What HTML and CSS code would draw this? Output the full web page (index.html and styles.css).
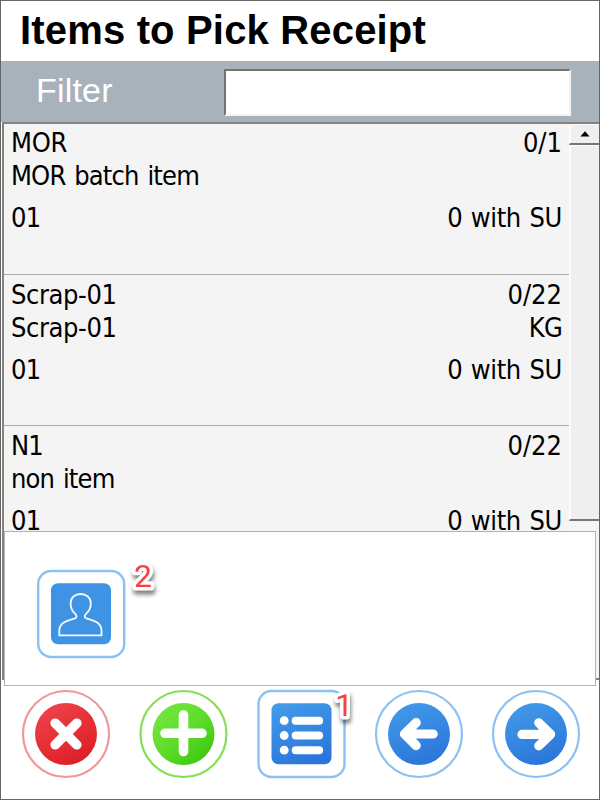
FILE: index.html
```html
<!DOCTYPE html>
<html lang="en">
<head>
<meta charset="utf-8">
<title>Items to Pick Receipt</title>
<link rel="stylesheet" href="styles.css">
</head>
<body>
<svg width="0" height="0" class="defs" aria-hidden="true">
  <defs>
    <linearGradient id="blue" x1="0.3" y1="0" x2="0.7" y2="1"><stop offset="0" stop-color="#4199e8"/><stop offset="1" stop-color="#2a74da"/></linearGradient>
    <linearGradient id="red" x1="0.2" y1="0" x2="0.8" y2="1"><stop offset="0" stop-color="#ee444b"/><stop offset="1" stop-color="#dd1c23"/></linearGradient>
    <linearGradient id="green" x1="0.15" y1="0.1" x2="0.85" y2="0.9"><stop offset="0" stop-color="#74e53d"/><stop offset="0.5" stop-color="#5edc2c"/><stop offset="1" stop-color="#3dc911"/></linearGradient>
  </defs>
</svg>
<div class="window">
  <h1 class="title">Items to Pick Receipt</h1>
  <div class="filter">
    <label class="filter-label" for="filter">Filter</label>
    <input class="filter-input" id="filter" type="text">
  </div>
  <main class="list">
    <div class="items">
      <section class="item">
        <div class="line"><span class="t-mor">MOR</span><span class="t-qty">0/1</span></div>
        <div class="line"><span class="t-name">MOR batch item</span></div>
        <div class="line last"><span class="t-wh">01</span><span class="t-su">0 with SU</span></div>
      </section>
      <section class="item">
        <div class="line"><span class="t-scrap">Scrap-01</span><span class="t-qty">0/22</span></div>
        <div class="line"><span class="t-scrap">Scrap-01</span><span class="t-kg">KG</span></div>
        <div class="line last"><span class="t-wh">01</span><span class="t-su">0 with SU</span></div>
      </section>
      <section class="item">
        <div class="line"><span class="t-n">N1</span><span class="t-qty">0/22</span></div>
        <div class="line"><span class="t-name">non item</span></div>
        <div class="line last"><span class="t-wh">01</span><span class="t-su">0 with SU</span></div>
      </section>
    </div>
    <div class="scrollbar">
      <div class="arrow"><svg width="10" height="6" viewBox="0 0 10 6"><path d="M5 0.3 9.6 5.6H.4z"/></svg></div>
      <div class="thumb"></div>
    </div>
  </main>
  <nav class="toolbar">
    <button class="tool"><svg viewBox="0 0 88 88"><circle cx="44" cy="44" r="43" fill="#fff" stroke="#f0979b" stroke-width="2.2"/><circle cx="44" cy="44" r="31" fill="url(#red)"/><path d="M33.2 33.2 54.8 54.8M54.8 33.2 33.2 54.8" stroke="#fff" stroke-width="9.6" stroke-linecap="round"/></svg></button>
    <button class="tool"><svg viewBox="0 0 88 88"><circle cx="43.5" cy="44" r="43" fill="#fff" stroke="#83e055" stroke-width="2.2"/><circle cx="43.5" cy="44" r="31" fill="url(#green)"/><path d="M43.5 25V61.5M25 43.3H62" stroke="#fff" stroke-width="9.6" stroke-linecap="round"/></svg></button>
    <button class="tool menu"><svg viewBox="0 0 88 88"><rect x="1.5" y="1" width="86" height="86" rx="13" fill="#fff" stroke="#8bc1f3" stroke-width="2.4"/><rect x="14.5" y="13.3" width="60" height="61" rx="7" fill="url(#blue)"/><g fill="#fff"><circle cx="27.2" cy="30.7" r="4.4"/><circle cx="27.2" cy="45.5" r="4.4"/><circle cx="27.2" cy="60.2" r="4.4"/><rect x="34.7" y="26.7" width="31.4" height="8" rx="4"/><rect x="34.7" y="41.5" width="31.4" height="8" rx="4"/><rect x="34.7" y="56.2" width="31.4" height="8" rx="4"/></g></svg><svg class="mark mark-one" viewBox="0 0 40 44"><text x="9" y="32">1</text></svg></button>
    <button class="tool"><svg viewBox="0 0 88 88"><circle cx="44" cy="44" r="43" fill="#fff" stroke="#8bc1f3" stroke-width="2.2"/><circle cx="44" cy="44" r="31" fill="url(#blue)"/><path d="M41.2 32.6 29.4 44 41.2 55.6M31 44H58.2" fill="none" stroke="#fff" stroke-width="9.2" stroke-linecap="round" stroke-linejoin="round"/><path d="M31 44 41.2 34V54z" fill="#fff"/></svg></button>
    <button class="tool"><svg viewBox="0 0 88 88"><circle cx="44" cy="44" r="43" fill="#fff" stroke="#8bc1f3" stroke-width="2.2"/><circle cx="44" cy="44" r="31" fill="url(#blue)"/><path d="M46.8 32.8 58.6 44.4 46.8 55.8M57 44.4H30" fill="none" stroke="#fff" stroke-width="9.2" stroke-linecap="round" stroke-linejoin="round"/><path d="M57 44.4 46.8 34.4V54.4z" fill="#fff"/></svg></button>
  </nav>
  <div class="popup">
    <button class="tool"><svg viewBox="0 0 88 88"><rect x="1.2" y="1" width="86" height="86" rx="13" fill="#fff" stroke="#8bc1f3" stroke-width="2.4"/><rect x="14" y="13.3" width="60" height="61" rx="7" fill="#3f93e5"/><path d="M22.3 65.4V60.5C22.5 51.5 32 50.5 38 48.3 40.3 47.3 39.7 45.6 38.5 44.2 35 41 33.6 37.5 33.6 33.5 33.6 27.5 38 24 43.6 24S53.8 27.5 53.8 33.5C53.8 37.5 52.3 41 48.8 44.2 47.4 45.6 47 47.3 49.5 48.3 55.5 50.5 64.3 51.5 64.5 60.5V65.4Z" fill="none" stroke="#f4f9ff" stroke-width="1.8"/></svg><svg class="mark mark-two" viewBox="0 0 40 44"><text x="9" y="32">2</text></svg></button>
  </div>
</div>
</body>
</html>
```
FILE: styles.css
```css
* { box-sizing: border-box; }
body { margin: 0; background: #fff; color: #000; }
.defs { position: absolute; }
.window {
  position: relative;
  display: flex;
  flex-direction: column;
  width: 600px;
  height: 800px;
  border: 1px solid #666;
  overflow: hidden;
  font-family: "Liberation Sans", Arial, sans-serif;
}
.title {
  flex: none;
  height: 60px;
  margin: 0;
  padding-left: 19px;
  font-size: 40px;
  line-height: 58px;
  letter-spacing: 0.17px;
}
.filter {
  flex: none;
  display: flex;
  justify-content: space-between;
  height: 61px;
  padding: 7px 28px 0 35px;
  background: #a8b2bb;
}
.filter-label { color: #fff; font-size: 34px; line-height: 44px; letter-spacing: 0.2px; }
.filter-input {
  width: 347px;
  height: 47px;
  margin-top: 1px;
  background: #fff;
  border: 2px solid;
  border-color: #77736f #f5f4f2 #f5f4f2 #77736f;
  outline: 0;
}
.list {
  flex: none;
  display: flex;
  height: 558px;
  margin-left: 1px;
  border-top: 2px solid #85827f;
  border-left: 2px solid #85827f;
  border-bottom: 2px solid #85827f;
  background: #f4f4f4;
  overflow: hidden;
}
.items {
  flex: 1;
  font-family: "DejaVu Sans Condensed", "DejaVu Sans", sans-serif;
  font-stretch: condensed;
  font-size: 27px;
}
.item { height: 151px; padding: 2px 7px 0 7px; border-bottom: 1px solid #aaa; }
.item + .item { padding-top: 3px; }
.line { display: flex; justify-content: space-between; height: 33px; line-height: 33px; white-space: pre; }
.last { margin-top: 9px; }
.t-mor { letter-spacing: -0.3px; }
.t-name { letter-spacing: -0.85px; word-spacing: 2px; }
.t-scrap { letter-spacing: -0.4px; }
.t-wh, .t-n { letter-spacing: -0.8px; }
.t-su { letter-spacing: -0.35px; word-spacing: 1.2px; }
.t-kg { letter-spacing: -0.8px; }
.scrollbar { width: 30px; background: #f5f5f5; }
.arrow, .thumb {
  background: #efefef;
  border-left: 1px solid #fff;
  border-bottom: 2px solid #777;
  box-shadow: inset 1px 1px #fafafa;
}
.arrow { height: 21px; display: flex; align-items: center; justify-content: center; }
.thumb { height: 376px; }
.toolbar {
  display: flex;
  justify-content: space-between;
  padding: 10px 19px 0 21px;
}
.tool {
  position: relative;
  width: 88px;
  height: 88px;
  padding: 0;
  border: 0;
  background: none;
}
.tool svg { display: block; width: 88px; height: 88px; overflow: visible; }
.popup {
  position: absolute;
  left: 3px;
  top: 530px;
  width: 592px;
  height: 155px;
  padding: 38px 32px;
  background: #fff;
  border: 1px solid #aab5bf;
}
.tool .mark {
  position: absolute;
  width: 40px;
  height: 44px;
  filter: drop-shadow(1px 4px 2px rgba(0, 0, 0, .5));
}
.mark text {
  font: 400 32px Roboto, Arial, sans-serif;
  fill: #fb4044;
  stroke: #fff;
  stroke-width: 7px;
  stroke-linejoin: round;
  paint-order: stroke;
}
.tool .mark-one { left: 69px; top: -6px; }
.tool .mark-two { left: 88px; top: -15px; }
```
